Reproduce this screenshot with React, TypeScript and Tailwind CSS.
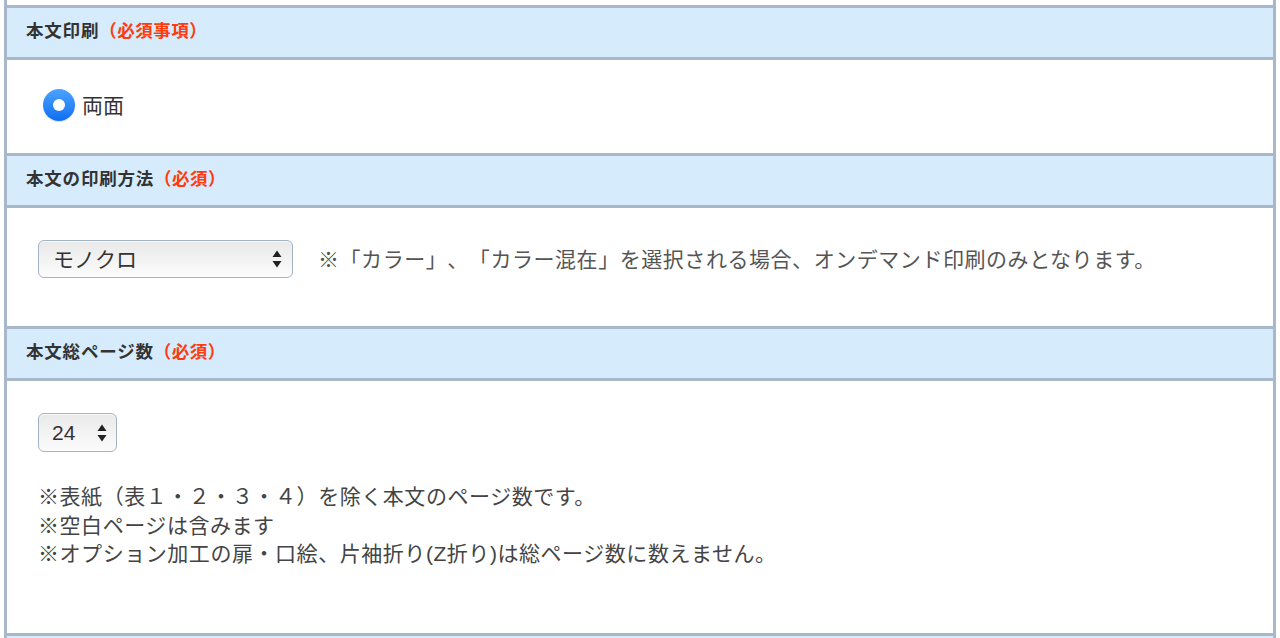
import React from "react";

const FONT = '"Liberation Sans", "Noto Sans CJK JP", sans-serif';

function Arrows() {
  return (
    <svg width="10" height="18" viewBox="0 0 10 18" className="shrink-0">
      <polygon points="5,0.5 9.5,7 0.5,7" fill="#222" />
      <polygon points="0.5,11 9.5,11 5,17.5" fill="#222" />
    </svg>
  );
}

function Header({ title, req }: { title: string; req: string }) {
  return (
    <div className="h-[52px] border-b-[3px] border-[#a8b8ca] bg-[#d6ebfc] flex items-center pl-[19px] pb-[1px]">
      <span className="text-[17.5px] font-bold text-[#333] leading-none tracking-[0.8px]">{title}</span>
      <span className="text-[17.5px] font-bold text-[#ff3a0c] leading-none tracking-[0.5px]">{req}</span>
    </div>
  );
}

export default function App() {
  return (
    <div
      className="w-[1280px] h-[638px] bg-white overflow-hidden [text-spacing-trim:space-all]"
      style={{ fontFamily: FONT }}
    >
      <div className="ml-[4px] w-[1272px] border-x-[3px] border-[#a8b8ca]">
        <div className="h-[8px] border-b-[3px] border-[#a8b8ca] bg-white" />

        <Header title="本文印刷" req="（必須事項）" />
        <div className="h-[96px] border-b-[3px] border-[#a8b8ca] flex items-center pl-[36px] pb-[3px]">
          <div className="flex items-center gap-[7px]">
            <div className="w-[32px] h-[32px] rounded-full bg-gradient-to-b from-[#4aa3ff] to-[#0c6ef2] flex items-center justify-center shadow-[0_1px_1px_rgba(0,0,0,0.15)]">
              <div className="w-[12px] h-[12px] rounded-full bg-white" />
            </div>
            <span className="text-[21px] leading-none text-[#333]">両面</span>
          </div>
        </div>

        <Header title="本文の印刷方法" req="（必須）" />
        <div className="h-[121px] border-b-[3px] border-[#a8b8ca] pl-[31px] pt-[32px]">
          <div className="flex items-center">
            <div className="w-[255px] h-[38px] rounded-[6px] border border-[#a3b3c6] bg-gradient-to-b from-[#e9e9e9] to-[#fcfcfc] shadow-[inset_0_1px_0_rgba(255,255,255,0.8)] flex items-center justify-between pl-[14px] pr-[10px]">
              <span className="text-[21px] leading-none text-[#333]">モノクロ</span>
              <Arrows />
            </div>
            <span className="ml-[25px] text-[21px] leading-none text-[#555] tracking-[0.55px]">
              ※「カラー」、「カラー混在」を選択される場合、オンデマンド印刷のみとなります。
            </span>
          </div>
        </div>

        <Header title="本文総ページ数" req="（必須）" />
        <div className="h-[255px] border-b-[3px] border-[#a8b8ca] pl-[31px] pt-[32px]">
          <div className="w-[79px] h-[39px] rounded-[6px] border border-[#a3b3c6] bg-gradient-to-b from-[#e9e9e9] to-[#fcfcfc] shadow-[inset_0_1px_0_rgba(255,255,255,0.8)] flex items-center justify-between pl-[13px] pr-[9px]">
            <span className="text-[21px] leading-none text-[#333]">24</span>
            <Arrows />
          </div>
          <div className="mt-[31px] text-[21px] leading-[28.5px] text-[#444] tracking-[0.55px]">
            <p>※表紙（表１・２・３・４）を除く本文のページ数です。</p>
            <p>※空白ページは含みます</p>
            <p>※オプション加工の扉・口絵、片袖折り(Z折り)は総ページ数に数えません。</p>
          </div>
        </div>

        <div className="h-[10px] bg-[#d6ebfc]" />
      </div>
    </div>
  );
}
